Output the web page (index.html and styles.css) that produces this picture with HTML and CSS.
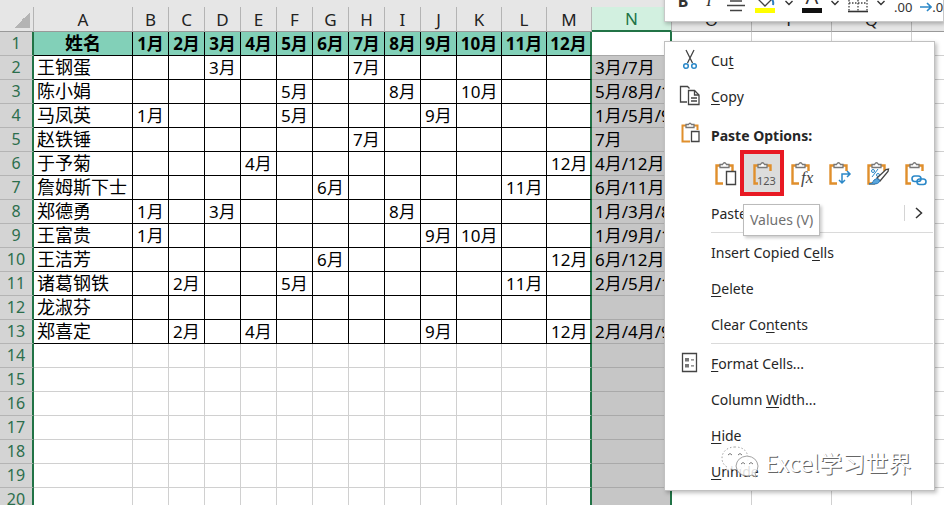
FILE: index.html
```html
<!DOCTYPE html>
<html lang="zh-CN">
<head>
  <meta charset="UTF-8">
  <meta name="viewport" content="width=device-width, initial-scale=1.0">
  <title>Excel</title>
  <link rel="stylesheet" href="styles.css">
</head>
<body>
  <table class="sheet">
    <colgroup id="cols"></colgroup>
    <thead id="letters"></thead>
    <tbody id="rows"></tbody>
  </table>

  <!-- Mini toolbar -->
  <div class="toolbar">
    <button class="tool tool-bold">B</button>
    <button class="tool tool-italic">I</button>
    <button class="tool" aria-label="Center">
      <svg width="20" height="28"><path d="M1 11h18M4 16h12M1 20.500h18M4 25.500h12" stroke="#444" stroke-width="1.400" fill="none"/></svg>
    </button>
    <button class="tool" aria-label="Fill color">
      <svg width="22" height="28"><path d="M4 14l7-7 7 7-7 7z" stroke="#444" stroke-width="1.300" fill="#fff"/><path d="M17 13q3 3 2 7" stroke="#2f7fc1" stroke-width="2" fill="none"/><path d="M1 23h20v5H1z" fill="#ffff00"/></svg>
    </button>
    <button class="tool arrow" aria-label="Fill menu">
      <svg width="10" height="28"><path d="M1.500 16L5 19.500 8.500 16" stroke="#333" stroke-width="1.400" fill="none"/></svg>
    </button>
    <button class="tool tool-color">A</button>
    <button class="tool arrow" aria-label="Color menu">
      <svg width="10" height="28"><path d="M1.500 16L5 19.500 8.500 16" stroke="#333" stroke-width="1.400" fill="none"/></svg>
    </button>
    <button class="tool" aria-label="Borders">
      <svg width="20" height="28"><path d="M1 9v17M19 9v17M10 9v17M1 18h18" stroke="#444" stroke-width="1.300" stroke-dasharray="1.500 1.500" fill="none"/><path d="M0 26.500h20" stroke="#333" stroke-width="1.600"/></svg>
    </button>
    <button class="tool arrow" aria-label="Borders menu">
      <svg width="10" height="28"><path d="M1.500 16L5 19.500 8.500 16" stroke="#333" stroke-width="1.400" fill="none"/></svg>
    </button>
    <button class="tool tool-decimal">.00</button>
    <button class="tool tool-decimal"><svg width="12" height="12"><path d="M0 6h11M7 2l4 4-4 4" stroke="#2b88c8" stroke-width="1.600" fill="none"/></svg>.0</button>
  </div>

  <!-- Context menu -->
  <div class="menu">
    <button class="item">
      <svg class="icon" width="22" height="22" fill="none"><path d="M7 1l6.500 13M15 1L8.500 14" stroke="#444" stroke-width="1.300"/><circle cx="7" cy="17" r="2.300" stroke="#2b88c8" stroke-width="1.500"/><circle cx="15" cy="17" r="2.300" stroke="#2b88c8" stroke-width="1.500"/></svg>
      <span>Cu<u>t</u></span>
    </button>
    <button class="item">
      <svg class="icon" width="22" height="22" fill="none" stroke="#444" stroke-width="1.300"><path d="M8 17H1.500V1.500h7l2 2"/><path d="M9.500 5.500h6l4.500 4.500v9.500H9.500z" fill="#fff"/><path d="M15.500 5.500V10H20M12 13h6M12 16h6"/></svg>
      <span><u>C</u>opy</span>
    </button>
    <div class="paste-title">
      <svg class="icon" width="22" height="22" fill="none"><path d="M7 3.500H3.500v16H11M15 3.500h3.500V8" stroke="#e08f2c" stroke-width="2"/><path d="M7 5.500v-3h2.500q1.500-2.500 3 0H15v3z" fill="#fff" stroke="#777" stroke-width="1.300"/><path d="M12.500 9.500H20v10h-7.500z" fill="#fff" stroke="#444" stroke-width="1.300"/></svg>
      <strong>Paste Options:</strong>
    </div>
    <div class="paste-options">
      <button class="paste" aria-label="Paste">
        <svg width="24" height="26" fill="none"><use href="#clip"/><path d="M12.500 10.500h9v13h-9z" fill="#fff" stroke="#444" stroke-width="1.400"/></svg>
      </button>
      <button class="paste selected" aria-label="Values">
        <svg width="24" height="26" fill="none"><use href="#clip"/><path d="M6 12h18v14H6z" fill="#dcdcdc"/><text x="5" y="24" class="num">123</text></svg>
      </button>
      <button class="paste" aria-label="Formulas">
        <svg width="24" height="26" fill="none"><use href="#clip"/><path d="M9 12h12v13H9z" fill="#fff"/><text x="11" y="22" class="fx">fx</text></svg>
      </button>
      <button class="paste" aria-label="Transpose">
        <svg width="24" height="26" fill="none"><use href="#clip"/><path d="M9 11h12v13H9z" fill="#fff"/><path d="M22 13h-8v9M19 10l3 3-3 3M11 19l3 3 3-3" stroke="#2b88c8" stroke-width="1.500"/></svg>
      </button>
      <button class="paste" aria-label="Formatting">
        <svg width="24" height="26" fill="none"><use href="#clip"/><path d="M6 16l6-8" stroke="#2b88c8"/><circle cx="7" cy="10" r="1.500" stroke="#2b88c8"/><circle cx="12" cy="14" r="1.500" stroke="#2b88c8"/><path d="M11 17L20 8.500l2.500-.5-.5 2.500L14 20z" fill="#fff" stroke="#444" stroke-width="1.300"/><path d="M3 23q4 0 5-4 3-3 5.500 0 1 5-10.500 4z" fill="#5ba7dd" stroke="#2b78b8"/></svg>
      </button>
      <button class="paste" aria-label="Link">
        <svg width="24" height="26" fill="none"><use href="#clip"/><path d="M7 15h16v10H7z" fill="#fff"/><g stroke="#2b88c8" stroke-width="1.600"><rect x="8" y="15" width="9" height="5.500" rx="2.700"/><rect x="13" y="18" width="9" height="5.500" rx="2.700"/></g></svg>
      </button>
    </div>
    <button class="item">
      <span class="icon"></span>
      <span>Paste <u>S</u>pecial...</span>
      <svg class="more" width="20" height="18" fill="none"><path d="M.5 1v16" stroke="#d4d4d4"/><path d="M12 4l5.500 5-5.500 5" stroke="#333" stroke-width="1.500"/></svg>
    </button>
    <hr>
    <button class="item"><span class="icon"></span><span>Insert Copied C<u>e</u>lls</span></button>
    <button class="item"><span class="icon"></span><span><u>D</u>elete</span></button>
    <button class="item"><span class="icon"></span><span>Clear Co<u>n</u>tents</span></button>
    <hr>
    <button class="item">
      <svg class="icon" width="22" height="22" fill="none"><path d="M3.500 1.500h14v18h-14z" stroke="#444" stroke-width="1.300"/><path d="M6 6h4v3.500H6zM6 12h4v3.500H6z" fill="#777"/><path d="M12 7.800h3M12 13.800h3" stroke="#777" stroke-width="1.300"/></svg>
      <span><u>F</u>ormat Cells...</span>
    </button>
    <button class="item"><span class="icon"></span><span>Column <u>W</u>idth...</span></button>
    <button class="item"><span class="icon"></span><span><u>H</u>ide</span></button>
    <button class="item"><span class="icon"></span><span><u>U</u>nhide</span></button>
    <div class="tooltip">Values (V)</div>
  </div>

  <!-- Watermark -->
  <div class="watermark">
    <svg width="38" height="32" fill="#fff" fill-opacity="0.85" stroke="#999" stroke-width="0.900"><path d="M14 1C6 1 1 6 1 12q0 6 5 9l-1 4 5-2q4 1 8 0 9-3 9-11Q26 1 14 1z" stroke-dasharray="1.500 2"/><path d="M26 10q-10 1-11 10 1 9 11 10 3 0 5-1l4 2-1-4q3-3 3-7-1-9-11-10z"/><path d="M7 9q2-3 4 0M17 9q2-3 4 0M20 18q2-3 4 0M28 18q2-3 4 0" fill="none" stroke="#666"/></svg>
    <span>Excel学习世界</span>
  </div>

  <svg width="0" height="0" class="defs">
    <g id="clip"><path d="M6 4.500H2.500v18H9M15 4.500h3.500V10" stroke="#e08f2c" stroke-width="2.400" fill="none"/><path d="M6 6.500v-3h2.500q2-3.500 4 0H15v3z" fill="#fff" stroke="#777" stroke-width="1.300"/></g>
  </svg>

  <script src="sheet.js"></script>
</body>
</html>
```

FILE: styles.css
```css
* {
  box-sizing: border-box;
}

body {
  margin: 0;
  padding-top: 7px;
  height: 100vh;
  overflow: hidden;
  position: relative;
  background: #e6e6e6;
  color: #000;
  font-family: "Noto Sans", "Noto Sans CJK SC", sans-serif;
}

button {
  border: 0;
  padding: 0;
  background: none;
  font: inherit;
  color: inherit;
}

.defs {
  position: absolute;
}

/* Sheet */
.sheet {
  width: 100%;
  table-layout: fixed;
  border-collapse: separate;
  border-spacing: 0;
  background: #fff;
  font-size: 17px;
  line-height: 23px;
}

.col-head { width: 34px; }
.col-name { width: 99px; }
.col-month { width: 36px; }
.col-wide { width: 45px; }
.col-extra { width: 80px; }

.sheet th,
.sheet td {
  height: 24px;
  padding: 0 0 0 4px;
  border-right: 1px solid #d0d0d0;
  border-bottom: 1px solid #d0d0d0;
  white-space: nowrap;
  overflow: hidden;
  text-align: left;
  font-weight: normal;
}

.sheet thead th {
  height: 25px;
  padding: 0;
  background: #e6e6e6;
  border-right-color: #b4b4b4;
  border-bottom-color: #999;
  text-align: center;
  color: #222;
}

.sheet thead .corner {
  background: linear-gradient(135deg, transparent 50%, #b4b4b4 50%) no-repeat 14px 5px / 16px 16px #e6e6e6;
}

.sheet thead .picked {
  background: #d2f0e0;
  color: #217346;
  border-bottom: 2px solid #217346;
}

.sheet .row-head {
  padding: 0;
  background: #d4d4d4;
  color: #2c6e4c;
  border-right: 2px solid #217346;
  border-bottom-color: #b4b4b4;
  font-size: 16px;
  text-align: center;
}

.sheet .data {
  border-color: #000;
}

.sheet .name {
  padding-left: 3px;
  font-size: 18px;
}

.sheet .title {
  padding: 0;
  background: #82d0b8;
  font-weight: bold;
  text-align: center;
}

.sheet .before-picked {
  border-right: 2px solid #217346;
}

.sheet .picked-cell {
  padding-left: 3px;
  background: #c6c6c6;
  border-right: 2px solid #217346;
  border-bottom-color: #a9a9a9;
}

.sheet .active {
  background: #fff;
}

/* Mini toolbar */
.toolbar {
  position: absolute;
  top: -20px;
  left: 664px;
  right: 0;
  height: 42px;
  padding: 0 0 4px 9px;
  display: flex;
  align-items: center;
  gap: 8px;
  overflow: hidden;
  background: #fff;
  border: 1px solid #c8c8c8;
  box-shadow: 1px 2px 4px rgba(0, 0, 0, 0.25);
  color: #333;
}

.tool {
  flex: none;
  height: 28px;
  min-width: 18px;
  font-size: 16px;
  line-height: 32px;
}

.arrow {
  min-width: 10px;
}

.tool svg {
  display: block;
}

.tool-bold {
  font-weight: bold;
}

.tool-italic {
  font-family: "Liberation Serif", serif;
  font-style: italic;
}

.tool-color {
  width: 20px;
  font-size: 20px;
  line-height: 24px;
  border-bottom: 5px solid #111;
}

.tool-decimal {
  display: flex;
  align-items: flex-end;
  font-size: 13px;
  line-height: 12px;
}

/* Context menu */
.menu {
  position: absolute;
  top: 41px;
  left: 664px;
  width: 271px;
  padding: 0 1px 1px 14px;
  display: flex;
  flex-direction: column;
  background: #fff;
  border: 1px solid #c0c0c0;
  box-shadow: 2px 2px 4px rgba(0, 0, 0, 0.25);
  color: #262626;
  font-size: 14px;
}

.item {
  height: 36px;
  display: flex;
  align-items: center;
  gap: 10px;
  text-align: left;
}

.icon {
  flex: none;
  width: 22px;
}

.item u {
  text-underline-offset: 2px;
}

.more {
  margin-left: auto;
  margin-right: 9px;
}

.menu hr {
  width: 222px;
  margin: 1px 0 1px auto;
  border: 0;
  border-top: 1px solid #dadada;
}

.paste-title {
  height: 37px;
  display: flex;
  align-items: center;
  gap: 10px;
}

.paste-title strong {
  padding-top: 6px;
}

.paste-options {
  height: 44px;
  margin-left: 26px;
  display: flex;
  align-items: center;
}

.paste {
  flex: none;
  width: 38px;
  height: 46px;
  padding: 2px 0 0 4px;
  display: flex;
  align-items: center;
  justify-content: center;
}

.selected {
  width: 44px;
  margin: 0 -3px;
  background: #dcdcdc;
  border: 4px solid #e81923;
}

.num {
  fill: #555;
  font-size: 11px;
}

.fx {
  fill: #444;
  font-family: "Liberation Serif", serif;
  font-style: italic;
  font-size: 17px;
}

.tooltip {
  position: absolute;
  top: 162px;
  left: 78px;
  padding: 0 6px;
  background: #fff;
  border: 1px solid #bbb;
  box-shadow: 2px 2px 3px rgba(0, 0, 0, 0.2);
  color: #707070;
  line-height: 30px;
}

/* Watermark */
.watermark {
  position: absolute;
  top: 445px;
  left: 721px;
  display: flex;
  align-items: center;
  gap: 6px;
  color: #fff;
  font-family: "Noto Sans CJK SC", sans-serif;
  font-size: 23px;
  line-height: 34px;
  text-shadow: 1px 1px 0 #666;
}
```

FILE: sheet.js
```js
const letters = 'ABCDEFGHIJKLMNOPQR'.split('');
const months = [1, 2, 3, 4, 5, 6, 7, 8, 9, 10, 11, 12];

// name, months that are filled in, joined text
const people = [
  ['王钢蛋', [3, 7], '3月/7月'],
  ['陈小娟', [5, 8, 10], '5月/8月/10月'],
  ['马凤英', [1, 5, 9], '1月/5月/9月'],
  ['赵铁锤', [7], '7月'],
  ['于予菊', [4, 12], '4月/12月'],
  ['詹姆斯下士', [6, 11], '6月/11月'],
  ['郑德勇', [1, 3, 8], '1月/3月/8月'],
  ['王富贵', [1, 9, 10], '1月/9月/10月'],
  ['王洁芳', [6, 12], '6月/12月'],
  ['诸葛钢铁', [2, 5, 11], '2月/5月/11月'],
  ['龙淑芬', [], ''],
  ['郑喜定', [2, 4, 9, 12], '2月/4月/9月/12月']
];

function colClass(i) {
  if (i === 0) return 'col-name';
  if (i < 10) return 'col-month';
  if (i < 13) return 'col-wide';
  return 'col-extra';
}

function cell(row, i) {
  const person = people[row - 2];
  const classes = [];
  let text = '';

  if (i < 13 && row <= 13) {
    classes.push('data');
    if (i === 0) classes.push('name');
    if (row === 1) {
      classes.push('title');
      text = i === 0 ? '姓名' : months[i - 1] + '月';
    } else if (i === 0) {
      text = person[0];
    } else if (person[1].includes(i)) {
      text = i + '月';
    }
  }
  if (i === 12) classes.push('before-picked');
  if (i === 13) {
    classes.push('picked-cell');
    if (row === 1) classes.push('active');
    if (person) text = person[2];
  }
  return `<td class="${classes.join(' ')}">${text}</td>`;
}

document.getElementById('cols').innerHTML =
  '<col class="col-head">' + letters.map((l, i) => `<col class="${colClass(i)}">`).join('');

document.getElementById('letters').innerHTML =
  '<tr><th class="corner"></th>' +
  letters.map((l) => `<th class="${l === 'N' ? 'picked' : ''}">${l}</th>`).join('') + '</tr>';

let html = '';
for (let row = 1; row <= 20; row++) {
  html += `<tr><th class="row-head">${row}</th>` + letters.map((l, i) => cell(row, i)).join('') + '</tr>';
}
document.getElementById('rows').innerHTML = html;
```
